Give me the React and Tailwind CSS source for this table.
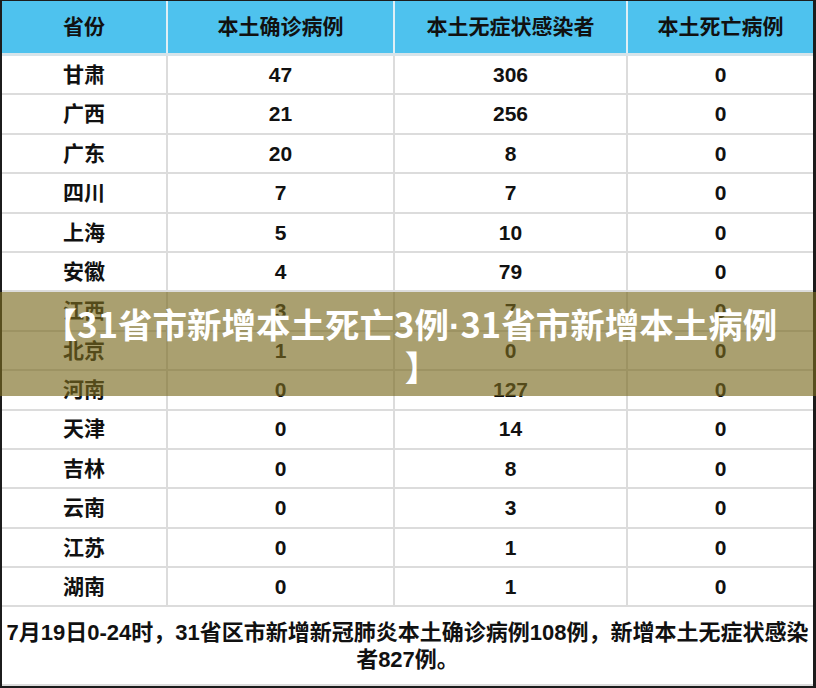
const rows = [
  ["甘肃", "47", "306", "0"],
  ["广西", "21", "256", "0"],
  ["广东", "20", "8", "0"],
  ["四川", "7", "7", "0"],
  ["上海", "5", "10", "0"],
  ["安徽", "4", "79", "0"],
  ["江西", "3", "7", "0"],
  ["北京", "1", "0", "0"],
  ["河南", "0", "127", "0"],
  ["天津", "0", "14", "0"],
  ["吉林", "0", "8", "0"],
  ["云南", "0", "3", "0"],
  ["江苏", "0", "1", "0"],
  ["湖南", "0", "1", "0"],
];

const headers = ["省份", "本土确诊病例", "本土无症状感染者", "本土死亡病例"];

export default function App() {
  return (
    <div className="relative h-[688px] w-[816px] overflow-hidden bg-[#1c1c1c] pb-[2px] pl-[2px] pr-[3px] pt-[1px] font-['Liberation_Sans','Noto_Sans_CJK_SC',sans-serif] text-[#111]">
      <div className="flex h-full flex-col bg-white">
        {/* header */}
        <div className="grid h-[55px] shrink-0 grid-cols-[166px_227px_233px_1fr] border-b-[3px] border-[#d6e4ea] bg-[#4ec2ee] text-[21px] font-bold">
          {headers.map((h, i) => (
            <div key={h} className={`flex items-center justify-center ${i < 3 ? "border-r-2 border-[#dfeff5]" : ""}`}>
              {h}
            </div>
          ))}
        </div>

        {/* rows */}
        {rows.map((r) => (
          <div key={r[0]} className="grid h-[39.4px] shrink-0 grid-cols-[166px_227px_233px_1fr] border-b-2 border-[#dcdcdc] text-[21px] font-bold">
            {r.map((c, i) => (
              <div key={i} className={`flex items-center justify-center ${i < 3 ? "border-r-2 border-[#dcdcdc]" : ""}`}>
                {c}
              </div>
            ))}
          </div>
        ))}

        {/* footer */}
        <div className="flex flex-1 items-center justify-center border-b-2 border-[#dcdcdc] text-center text-[22px] font-bold leading-[27px]">
          <p className="whitespace-nowrap">
            7月19日0-24时，31省区市新增新冠肺炎本土确诊病例108例，新增本土无症状感染
            <br />
            者827例。
          </p>
        </div>
      </div>

      {/* overlay title */}
      <div className="absolute left-0 right-0 top-[292px] flex h-[104px] items-center justify-center bg-[rgba(122,106,32,0.64)] text-center font-['Noto_Sans_CJK_SC',sans-serif] text-[34.5px] font-bold leading-[40px] text-white">
        <p className="whitespace-nowrap pl-[4px]">
          【31省市新增本土死亡3例<span className="font-['Liberation_Sans',sans-serif]">·</span>31省市新增本土病例
          <br />
          <span className="pl-[24px]">】</span>
        </p>
      </div>
    </div>
  );
}
